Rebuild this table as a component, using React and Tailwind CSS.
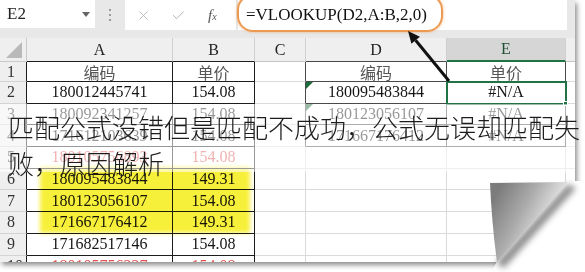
import { X, Check } from 'lucide-react'

const serif = "font-['Liberation_Serif','Noto_Sans_CJK_SC',serif]"
const cjk = "font-['Noto_Sans_CJK_SC',sans-serif]"

const rows = [
  { a: '编码', b: '单价', d: '编码', e: '单价', head: true },
  { a: '180012445741', b: '154.08', d: '180095483844', e: '#N/A', tri: true },
  { a: '180092341257', b: '154.08', d: '180123056107', e: '#N/A', tri: true },
  { a: '171612103639', b: '154.08', d: '171667176412', e: '#N/A' },
  { a: '180105756893', b: '154.08', red: true },
  { a: '180095483844', b: '149.31' },
  { a: '180123056107', b: '154.08' },
  { a: '171667176412', b: '149.31' },
  { a: '171682517146', b: '154.08' },
  { a: '180105756227', b: '154.08', red: true },
]

const gridLine = 'border-r border-b border-r-[#dadada] border-b-[#dadada]'
const blackLine = 'border-r border-b border-r-[#1c1c1c] border-b-[#1c1c1c]'
const darkLine = 'border-r border-b border-r-[#4a4a4a] border-b-[#4a4a4a]'

function Cell({ className = '', children }) {
  return (
    <div className={`relative flex items-center justify-center whitespace-nowrap ${className}`}>
      {children}
    </div>
  )
}

function Value({ text, red }) {
  if (!text) return null
  const isCjk = /[\u4e00-\u9fff]/.test(text)
  return (
    <span className={`${isCjk ? `${cjk} text-[#555] leading-[18px]` : `${serif} leading-none`} text-[16px] ${red ? 'text-[#e0524f]' : isCjk ? '' : 'text-[#151515]'}`}>
      {text}
    </span>
  )
}

function GreenTri() {
  return (
    <svg className="absolute left-0 top-0" width="7" height="7" viewBox="0 0 7 7">
      <path d="M0 0H7L0 7Z" fill="#1e6b3c" />
    </svg>
  )
}

function Sheet() {
  return (
    <div className="grid grid-cols-[27px_146px_82px_51px_141px_119px_1fr] grid-rows-[24px_20px_repeat(9,21.7px)]">
      {/* header row */}
      <Cell className="bg-[#efefef] border-r border-b border-r-[#c9c9c9] border-b-[#c9c9c9]">
        <svg className="absolute right-[4px] bottom-[3px]" width="16" height="16" viewBox="0 0 16 16">
          <path d="M16 0V16H0Z" fill="#b9b9b9" />
        </svg>
      </Cell>
      <Cell className={`bg-[#efefef] border-r border-b border-r-[#cfcfcf] border-b-[#1c1c1c] ${serif} text-[16px] text-[#222]`}>A</Cell>
      <Cell className={`bg-[#efefef] border-r border-b border-r-[#cfcfcf] border-b-[#1c1c1c] ${serif} text-[16px] text-[#222]`}>B</Cell>
      <Cell className={`bg-[#efefef] border-r border-b border-r-[#cfcfcf] border-b-[#c4c4c4] ${serif} text-[16px] text-[#222]`}>C</Cell>
      <Cell className={`bg-[#efefef] border-r border-b border-r-[#cfcfcf] border-b-[#4a4a4a] ${serif} text-[16px] text-[#222]`}>D</Cell>
      <Cell className={`bg-[#d6d6d6] border-r border-b-2 border-r-[#cfcfcf] border-b-[#217346] ${serif} text-[16px] text-[#1f4f32]`}>E</Cell>
      <Cell className="bg-[#efefef] border-b border-b-[#c4c4c4]" />

      {rows.map((r, i) => {
        const inRight = i < 4
        return [
          <Cell key={`n${i}`} className={`bg-[#efefef] justify-start pl-[7px] border-r border-b border-r-[#1c1c1c] border-b-[#d3d3d3] ${serif} text-[16px] text-[#333]`}>
            {i + 1}
          </Cell>,
          <Cell key={`a${i}`} className={blackLine}><Value text={r.a} red={r.red} /></Cell>,
          <Cell key={`b${i}`} className={blackLine}><Value text={r.b} red={r.red} /></Cell>,
          <Cell key={`c${i}`} className={inRight ? 'border-r border-b border-r-[#4a4a4a] border-b-[#dadada]' : gridLine} />,
          <Cell key={`d${i}`} className={inRight ? darkLine : gridLine}>
            {r.tri && <GreenTri />}
            <Value text={r.d} />
          </Cell>,
          <Cell key={`e${i}`} className={inRight ? darkLine : gridLine}><Value text={r.e} /></Cell>,
          <Cell key={`f${i}`} className="border-b border-b-[#dadada]" />,
        ]
      })}
    </div>
  )
}

export default function App() {
  return (
    <div className="relative w-[585px] h-[272px] bg-white overflow-hidden">
      <div className="relative w-[575px] h-[262px] bg-white overflow-hidden shadow-[2px_3px_5px_rgba(0,0,0,0.45)]">
        {/* name box + formula bar */}
        <div className="flex h-[30px] bg-[#e8e8e8]">
          <div className={`relative h-[28px] w-[95px] bg-white flex items-center pl-[7px] ${serif} text-[17px] text-[#222]`}>
            E2
            <svg className="absolute right-[5px] top-[12px]" width="8" height="5" viewBox="0 0 8 5">
              <path d="M0 0H8L4 5Z" fill="#666" />
            </svg>
          </div>
          <div className="w-[30px] flex flex-col items-center justify-center gap-[3px]">
            <span className="w-[2px] h-[2px] bg-[#9a9a9a]" />
            <span className="w-[2px] h-[2px] bg-[#9a9a9a]" />
            <span className="w-[2px] h-[2px] bg-[#9a9a9a]" />
          </div>
          <div className="w-[111px] h-[30px] bg-white flex items-center pl-[11px]">
            <X size={15} strokeWidth={1.4} className="text-[#b3b3b3]" />
            <Check size={15} strokeWidth={1.6} className="ml-[20px] text-[#b3b3b3]" />
            <span className={`ml-[22px] ${serif} italic text-[15px] text-[#555]`}>
              f<span className="text-[10px]">x</span>
            </span>
          </div>
          <div className={`ml-[2px] w-[329px] h-[30px] bg-white flex items-center pl-[8px] ${serif} text-[17px] text-[#111]`}>
            =VLOOKUP(D2,A:B,2,0)
          </div>
        </div>
        <div className="h-[8px] bg-[#e8e8e8]" />

        <Sheet />

        {/* selected cell E2 */}
        <div className="absolute left-[446px] top-[81px] w-[121px] h-[24px] border-2 border-[#217346]" />
        <div className="absolute left-[563px] top-[101px] w-[5px] h-[5px] bg-[#217346] border border-white" />

        {/* marker highlight */}
        <div className="absolute left-[40px] top-[167px] w-[210px] h-[66px] bg-[#f7f03a] blur-[2px] mix-blend-multiply" />

        {/* translucent title band */}
        <div className="absolute left-0 top-[104px] w-full h-[68px] bg-white/55" />
      </div>

      {/* orange outline around formula */}
      <div className="absolute left-[237px] top-[-6px] w-[206px] h-[38px] rounded-[16px] border-2 border-[#ec9a52] shadow-[0_0_3px_rgba(236,154,82,0.7)]" />

      {/* arrow, page curl */}
      <svg className="absolute left-0 top-0 pointer-events-none" width="585" height="272" viewBox="0 0 585 272">
        <defs>
          <linearGradient id="curl" x1="490" y1="205" x2="540" y2="232" gradientUnits="userSpaceOnUse">
            <stop offset="0" stopColor="#7c7c7c" />
            <stop offset="0.55" stopColor="#ababab" />
            <stop offset="1" stopColor="#dedede" />
          </linearGradient>
          <filter id="soft" x="-20%" y="-20%" width="140%" height="140%">
            <feGaussianBlur stdDeviation="3" />
          </filter>
        </defs>
        <line x1="449" y1="81" x2="415.6" y2="40.3" stroke="#111" strokeWidth="3" />
        <path d="M408 31L419.9 36.8L411.4 43.8Z" fill="#111" />

        <path d="M569 181L590 181L590 280L488 280L496 263Z" fill="#fff" />
        <path d="M568 184L576 188L504 268L496 263Z" fill="rgba(0,0,0,0.45)" filter="url(#soft)" />
        <path d="M490 183L568 182L497 262Q492 226 490 183Z" fill="url(#curl)" />
      </svg>

      {/* title */}
      <div className={`absolute left-[8px] top-[109px] w-[576px] ${cjk} font-light text-[26px] leading-[36px] text-[#1c1c1c]`}>
        匹配公式没错但是匹配不成功，公式无误却匹配失败，原因解析
      </div>
    </div>
  )
}
